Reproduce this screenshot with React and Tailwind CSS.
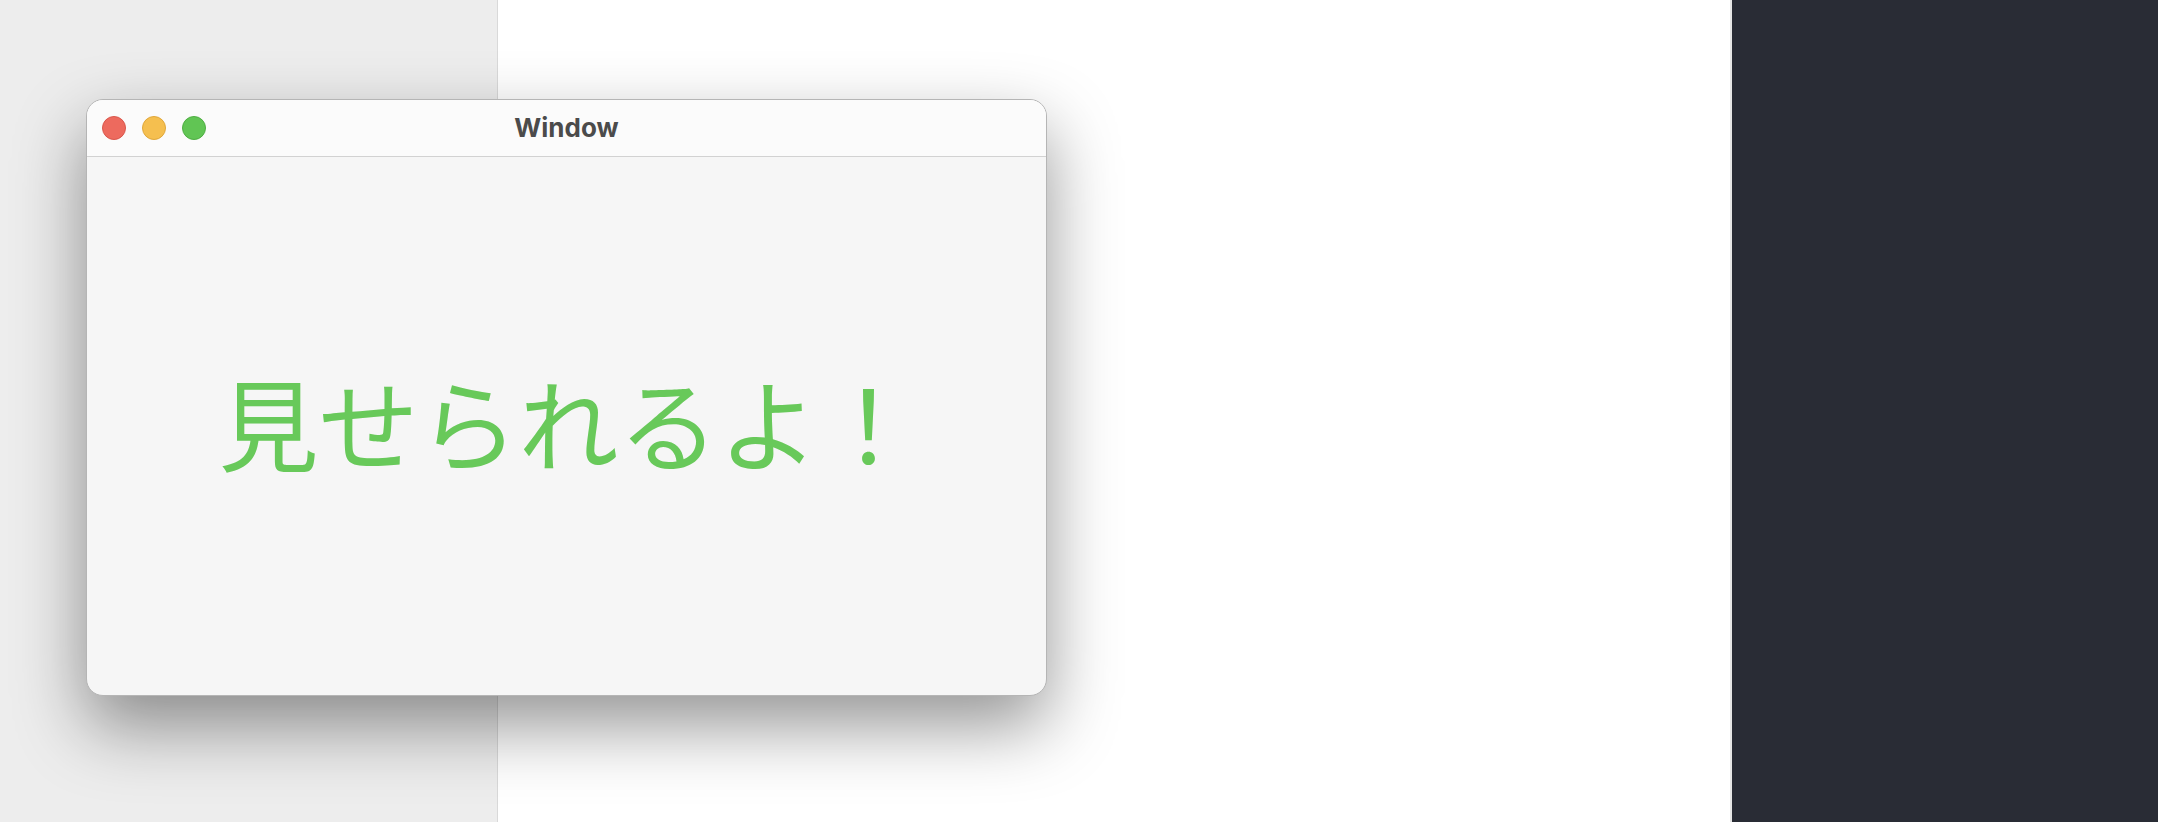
export default function App() {
  return (
    <div className="relative flex h-[822px] w-[2158px] overflow-hidden">
      <div className="w-[498px] shrink-0 border-r border-[#d9d9d9] bg-[#ededed]" />
      <div className="flex-1 bg-white" />
      <div className="w-[428px] shrink-0 border-l-2 border-[#e6e6e6] bg-[#292c35]" />

      <div className="absolute left-[86px] top-[99px] flex h-[597px] w-[961px] flex-col overflow-hidden rounded-[17px] border border-[#b5b5b5] bg-[#f6f6f6] shadow-[0_30px_70px_rgba(0,0,0,0.42)]">
        <div className="relative flex h-[57px] shrink-0 items-center border-b border-[#d2d2d2] bg-[#fbfbfb] px-[15px]">
          <div className="flex gap-[16px]">
            <span className="h-[24px] w-[24px] rounded-full border border-[#d9574c] bg-[#ed6a5e]" />
            <span className="h-[24px] w-[24px] rounded-full border border-[#dfa73b] bg-[#f5bf4f]" />
            <span className="h-[24px] w-[24px] rounded-full border border-[#4fae43] bg-[#61c554]" />
          </div>
          <div className="absolute inset-0 flex items-center justify-center pb-[1px] font-['Inter',sans-serif] text-[26px] font-bold text-[#4b4b4b]">
            Window
          </div>
        </div>
        <div className="flex flex-1 items-center justify-center pb-[11px]">
          <span className="pl-[4px] font-['Noto_Sans_CJK_JP',sans-serif] text-[100px] font-normal leading-none text-[#68c95a]">
            見せられるよ！
          </span>
        </div>
      </div>
    </div>
  );
}
